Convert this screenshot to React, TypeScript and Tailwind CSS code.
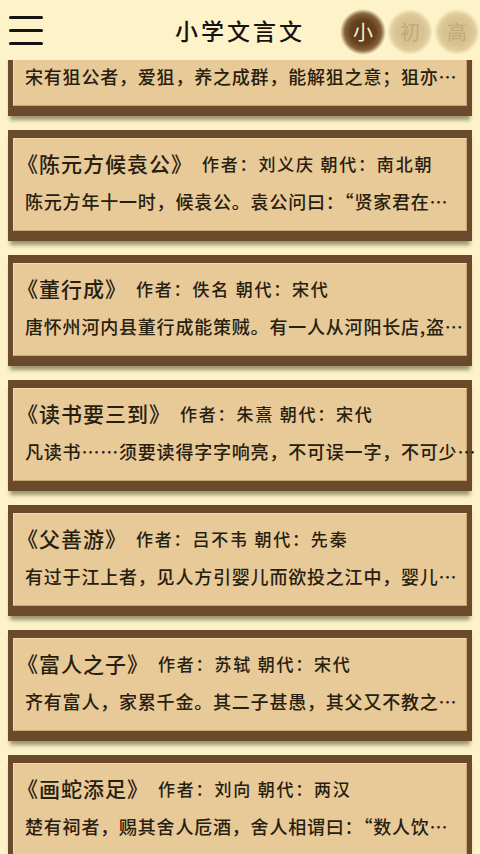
import React from "react";

type Piece = {
  title: string;
  author: string;
  dynasty: string;
  excerpt: string;
};

const pieces: Piece[] = [
  {
    title: "狙公",
    author: "刘基",
    dynasty: "明代",
    excerpt: "宋有狙公者，爱狙，养之成群，能解狙之意；狙亦…",
  },
  {
    title: "陈元方候袁公",
    author: "刘义庆",
    dynasty: "南北朝",
    excerpt: "陈元方年十一时，候袁公。袁公问曰：“贤家君在…",
  },
  {
    title: "董行成",
    author: "佚名",
    dynasty: "宋代",
    excerpt: "唐怀州河内县董行成能策贼。有一人从河阳长店,盗…",
  },
  {
    title: "读书要三到",
    author: "朱熹",
    dynasty: "宋代",
    excerpt: "凡读书……须要读得字字响亮，不可误一字，不可少…",
  },
  {
    title: "父善游",
    author: "吕不韦",
    dynasty: "先秦",
    excerpt: "有过于江上者，见人方引婴儿而欲投之江中，婴儿…",
  },
  {
    title: "富人之子",
    author: "苏轼",
    dynasty: "宋代",
    excerpt: "齐有富人，家累千金。其二子甚愚，其父又不教之…",
  },
  {
    title: "画蛇添足",
    author: "刘向",
    dynasty: "两汉",
    excerpt: "楚有祠者，赐其舍人卮酒，舍人相谓曰：“数人饮…",
  },
];

const FONT = "font-['Noto_Sans_CJK_SC',_'Noto_Sans',_sans-serif]";

function MenuIcon() {
  return (
    <div className="flex w-[34px] flex-col gap-[10px]">
      <div className="h-[3px] rounded-full bg-[#141414]" />
      <div className="h-[3px] rounded-full bg-[#141414]" />
      <div className="h-[3px] rounded-full bg-[#141414]" />
    </div>
  );
}

function LevelBadge({ label, active }: { label: string; active: boolean }) {
  return (
    <div
      className={
        active
          ? "flex h-[46px] w-[46px] items-center justify-center rounded-full bg-[radial-gradient(circle_closest-side,#573619_0%,#66421f_55%,#86643c_80%,rgba(170,140,100,0)_100%)] text-[20px] text-[#fbefc9]"
          : "flex h-[46px] w-[46px] items-center justify-center rounded-full bg-[radial-gradient(circle_closest-side,#d3bd8d_0%,#d8c393_60%,#e0cd9e_80%,rgba(240,225,180,0)_100%)] text-[20px] text-[#c1aa7c]"
      }
    >
      {label}
    </div>
  );
}

function PieceCard({ piece }: { piece: Piece }) {
  return (
    <div className="shrink-0 bg-[#6b4a2b] px-[5px] pt-[8px] pb-[10px] shadow-[0_6px_4px_-2px_rgba(70,72,40,0.55)]">
      <div className="h-[93px] border border-t-[#f3dcac] border-l-[#f3dcac] border-r-[#c9a676] border-b-[#c9a676] bg-[#e8c998] pl-[11px] pr-[2px] pt-[13px] text-[#27200f]">
        <div className="flex h-[24px] items-center whitespace-nowrap">
          <span className="-ml-[8px] text-[21px] font-medium tracking-[1px]">
            《{piece.title}》
          </span>
          <span className="ml-[9px] text-[17px] font-medium tracking-[1.8px]">
            作者：{piece.author} 朝代：{piece.dynasty}
          </span>
        </div>
        <div className="mt-[13px] flex h-[24px] items-center whitespace-nowrap text-[18px] font-medium tracking-[0.8px]">
          {piece.excerpt}
        </div>
      </div>
    </div>
  );
}

export default function App() {
  return (
    <div
      className={`${FONT} flex h-[854px] w-[480px] flex-col overflow-hidden bg-[#fef3c8]`}
    >
      <header className="relative z-10 flex h-[60px] shrink-0 items-center bg-[#fef3c8] pl-[9px] pt-[1px]">
        <MenuIcon />
        <div className="flex-1 pl-[132px] text-[23px] font-medium tracking-[3px] text-[#161310]">
          小学文言文
        </div>
        <div className="flex items-center gap-[1px] pt-[2px] pl-[2px]">
          <LevelBadge label="小" active />
          <LevelBadge label="初" active={false} />
          <LevelBadge label="高" active={false} />
        </div>
      </header>
      <main className="flex-1 overflow-hidden">
        <div className="-mt-[55px] flex flex-col gap-[14px] px-[8px]">
          {pieces.map((p) => (
            <PieceCard key={p.title} piece={p} />
          ))}
        </div>
      </main>
    </div>
  );
}
